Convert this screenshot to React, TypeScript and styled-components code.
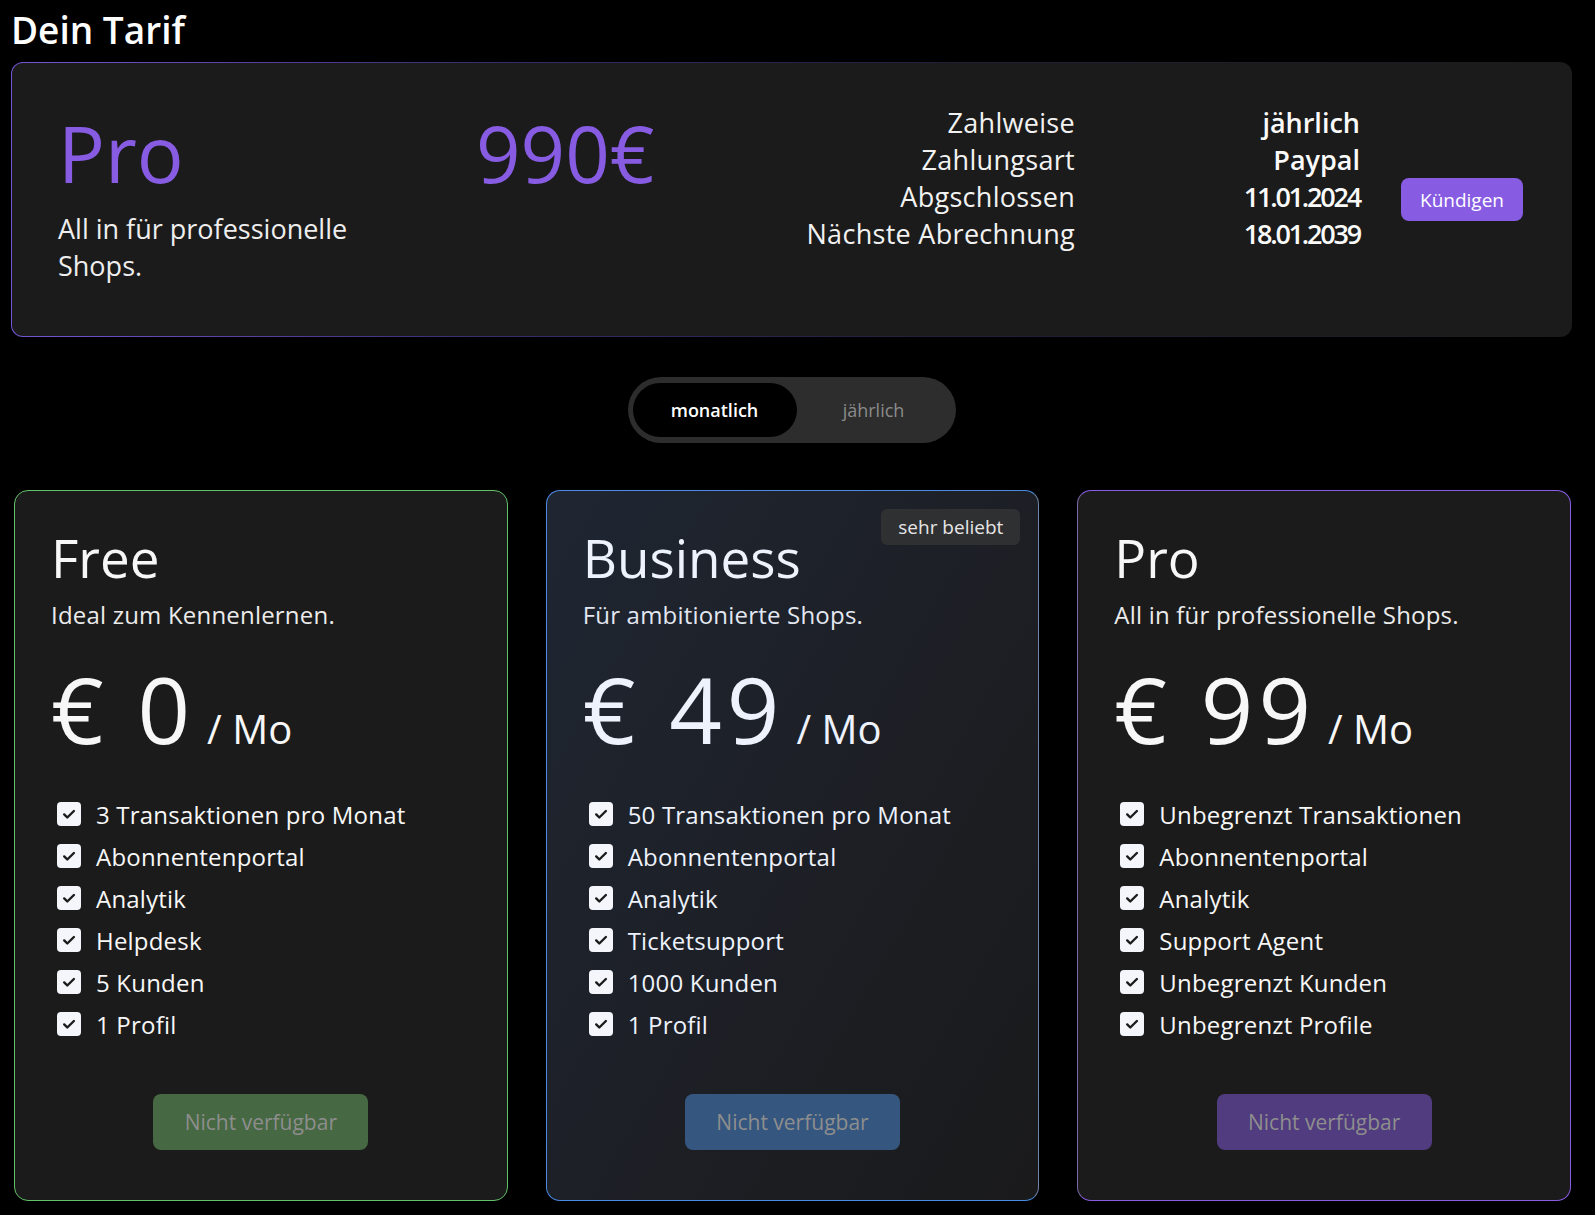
import React from "react";
import styled, { createGlobalStyle, css } from "styled-components";

const GlobalStyle = createGlobalStyle`
  html, body { margin: 0; padding: 0; background: #000; }
  body {
    font-family: "Open Sans", "DejaVu Sans", sans-serif;
    color: #f5f5f5;
    -webkit-font-smoothing: antialiased;
  }
  * { box-sizing: border-box; }
`;

const PURPLE = "#875ce3";

type Variant = "free" | "business" | "pro";

const variants: Record<
  Variant,
  { border: string; bg: string; button: string; text: string }
> = {
  free: {
    border: "#62c26a",
    bg: "#1b1b1b",
    button: "#466842",
    text: "#f7f7f7",
  },
  business: {
    border: "#4a8ce4 #6f86a8 #4a8ce4 #4a8ce4",
    bg: "linear-gradient(120deg, #1f2632 0%, #1d2027 45%, #1a1a1b 100%)",
    button: "#35567f",
    text: "#edf2fc",
  },
  pro: {
    border: "#8a5ce6 #8a5ce6 #8a5ce6 #7a68a8",
    bg: "#1b1b1b",
    button: "#503c7e",
    text: "#f7f7f7",
  },
};

const Page = styled.div`
  width: 1595px;
  padding: 8px 23px 16px 11px;
`;

const PageTitle = styled.h1`
  margin: 0 0 10px 0;
  font-size: 37px;
  line-height: 44px;
  font-weight: 600;
  color: #fff;
`;

const CurrentPlanCard = styled.section`
  display: flex;
  align-items: flex-start;
  height: 275px;
  padding: 41px 48px 41px 46px;
  border: 1px solid transparent;
  border-radius: 12px;
  background: linear-gradient(#1b1b1b, #1b1b1b) padding-box,
    linear-gradient(90deg, #7556d6 0%, #3a2c6e 30%, #231d38 60%, #1b1b1b 100%)
      border-box;
`;

const PlanColumn = styled.div`
  flex: 0 0 418px;
  padding-top: 9px;
`;

const CurrentPlanName = styled.div`
  font-size: 78px;
  line-height: 80px;
  color: ${PURPLE};
`;

const CurrentPlanDesc = styled.p`
  margin: 17px 0 0;
  max-width: 340px;
  font-size: 27px;
  line-height: 37px;
  color: #eeeeee;
`;

const CurrentPrice = styled.div`
  padding-top: 9px;
  font-size: 78px;
  line-height: 80px;
  color: ${PURPLE};
`;

const Spacer = styled.div`
  flex: 1;
`;

const DetailsGrid = styled.dl`
  margin: 0;
  display: grid;
  grid-template-columns: auto 200px;
  column-gap: 85px;
  font-size: 27px;
  line-height: 37px;
`;

const DetailLabel = styled.dt`
  text-align: right;
  color: #f2f2f2;
  letter-spacing: 0.3px;
`;

const DetailValue = styled.dd<{ $numeric?: boolean }>`
  margin: 0;
  text-align: right;
  font-weight: 600;
  color: #fafafa;
  letter-spacing: ${(p) => (p.$numeric ? "-2.2px" : "0")};
`;

const CancelButton = styled.button`
  align-self: center;
  margin-left: 41px;
  width: 122px;
  height: 43px;
  border: none;
  border-radius: 8px;
  background: ${PURPLE};
  color: #fff;
  font-family: inherit;
  font-size: 19px;
`;

const Toggle = styled.div`
  display: flex;
  width: 328px;
  height: 66px;
  margin: 40px auto 47px;
  padding: 6px 5px;
  border-radius: 33px;
  background: #2d2d2d;
`;

const ToggleOption = styled.div<{ $active?: boolean }>`
  display: flex;
  align-items: center;
  justify-content: center;
  border-radius: 27px;
  font-size: 18px;
  ${(p) =>
    p.$active
      ? css`
          flex: 0 0 164px;
          background: #000;
          color: #fff;
          font-weight: 600;
        `
      : css`
          flex: 1;
          color: #8b8b8b;
        `}
`;

const CardGrid = styled.div`
  display: grid;
  grid-template-columns: repeat(3, 1fr);
  gap: 38px;
  margin: 0 1px 0 3px;
`;

const PlanCard = styled.article<{ $variant: Variant }>`
  position: relative;
  display: flex;
  flex-direction: column;
  padding: 37px 36px 50px;
  border: 1px solid;
  border-color: ${(p) => variants[p.$variant].border};
  border-radius: 14px;
  background: ${(p) => variants[p.$variant].bg};
  color: ${(p) => variants[p.$variant].text};
`;

const Badge = styled.span`
  position: absolute;
  top: 18px;
  right: 18px;
  height: 36px;
  padding: 0 17px;
  border-radius: 6px;
  background: #2f3032;
  color: #e6e6e6;
  font-size: 19px;
  line-height: 36px;
`;

const CardTitle = styled.h2`
  margin: 0;
  font-size: 53px;
  line-height: 60px;
  font-weight: 400;
`;

const CardDesc = styled.p`
  margin: 12px 0 0;
  font-size: 24px;
  line-height: 30px;
  letter-spacing: 0.2px;
  opacity: 0.95;
`;

const PriceRow = styled.div`
  display: flex;
  align-items: baseline;
  margin-top: 29px;
  height: 100px;
`;

const PriceAmount = styled.span`
  font-size: 92px;
  line-height: 100px;
  font-weight: 500;
  letter-spacing: 5px;
`;

const PriceUnit = styled.span`
  margin-left: 12px;
  font-size: 40px;
`;

const FeatureList = styled.ul`
  margin: 34px 0 0;
  padding: 0;
  list-style: none;
`;

const FeatureRow = styled.li`
  display: flex;
  align-items: center;
  gap: 15px;
  height: 42px;
  padding-left: 6px;
  font-size: 24px;
  letter-spacing: 0.2px;
`;

const CheckIcon = styled.svg`
  flex: 0 0 24px;
  width: 24px;
  height: 24px;
`;

const UnavailableButton = styled.button<{ $variant: Variant }>`
  align-self: center;
  margin-top: 49px;
  width: 215px;
  height: 56px;
  border: none;
  border-radius: 8px;
  background: ${(p) => variants[p.$variant].button};
  color: #8e8e8e;
  font-family: inherit;
  font-size: 21px;
`;

const Check = () => (
  <CheckIcon viewBox="0 0 24 24">
    <rect x="0" y="0" width="24" height="24" rx="4" fill="#f4f6fb" />
    <path
      d="M7.2 12.4l3.1 3.1L16.9 9"
      fill="none"
      stroke="#1b1b1b"
      strokeWidth="2.4"
      strokeLinecap="round"
      strokeLinejoin="round"
    />
  </CheckIcon>
);

const plans: {
  variant: Variant;
  name: string;
  desc: string;
  price: string;
  badge?: string;
  features: string[];
}[] = [
  {
    variant: "free",
    name: "Free",
    desc: "Ideal zum Kennenlernen.",
    price: "€ 0",
    features: [
      "3 Transaktionen pro Monat",
      "Abonnentenportal",
      "Analytik",
      "Helpdesk",
      "5 Kunden",
      "1 Profil",
    ],
  },
  {
    variant: "business",
    name: "Business",
    desc: "Für ambitionierte Shops.",
    price: "€ 49",
    badge: "sehr beliebt",
    features: [
      "50 Transaktionen pro Monat",
      "Abonnentenportal",
      "Analytik",
      "Ticketsupport",
      "1000 Kunden",
      "1 Profil",
    ],
  },
  {
    variant: "pro",
    name: "Pro",
    desc: "All in für professionelle Shops.",
    price: "€ 99",
    features: [
      "Unbegrenzt Transaktionen",
      "Abonnentenportal",
      "Analytik",
      "Support Agent",
      "Unbegrenzt Kunden",
      "Unbegrenzt Profile",
    ],
  },
];

const details: [string, string, boolean][] = [
  ["Zahlweise", "jährlich", false],
  ["Zahlungsart", "Paypal", false],
  ["Abgschlossen", "11.01.2024", true],
  ["Nächste Abrechnung", "18.01.2039", true],
];

export default function App() {
  return (
    <>
      <GlobalStyle />
      <Page>
        <PageTitle>Dein Tarif</PageTitle>
        <CurrentPlanCard>
          <PlanColumn>
            <CurrentPlanName>Pro</CurrentPlanName>
            <CurrentPlanDesc>All in für professionelle Shops.</CurrentPlanDesc>
          </PlanColumn>
          <CurrentPrice>990€</CurrentPrice>
          <Spacer />
          <DetailsGrid>
            {details.map(([label, value, numeric]) => (
              <React.Fragment key={label}>
                <DetailLabel>{label}</DetailLabel>
                <DetailValue $numeric={numeric}>{value}</DetailValue>
              </React.Fragment>
            ))}
          </DetailsGrid>
          <CancelButton>Kündigen</CancelButton>
        </CurrentPlanCard>

        <Toggle>
          <ToggleOption $active>monatlich</ToggleOption>
          <ToggleOption>jährlich</ToggleOption>
        </Toggle>

        <CardGrid>
          {plans.map((plan) => (
            <PlanCard key={plan.name} $variant={plan.variant}>
              {plan.badge && <Badge>{plan.badge}</Badge>}
              <CardTitle>{plan.name}</CardTitle>
              <CardDesc>{plan.desc}</CardDesc>
              <PriceRow>
                <PriceAmount>{plan.price}</PriceAmount>
                <PriceUnit>/ Mo</PriceUnit>
              </PriceRow>
              <FeatureList>
                {plan.features.map((f) => (
                  <FeatureRow key={f}>
                    <Check />
                    {f}
                  </FeatureRow>
                ))}
              </FeatureList>
              <UnavailableButton $variant={plan.variant}>
                Nicht verfügbar
              </UnavailableButton>
            </PlanCard>
          ))}
        </CardGrid>
      </Page>
    </>
  );
}
